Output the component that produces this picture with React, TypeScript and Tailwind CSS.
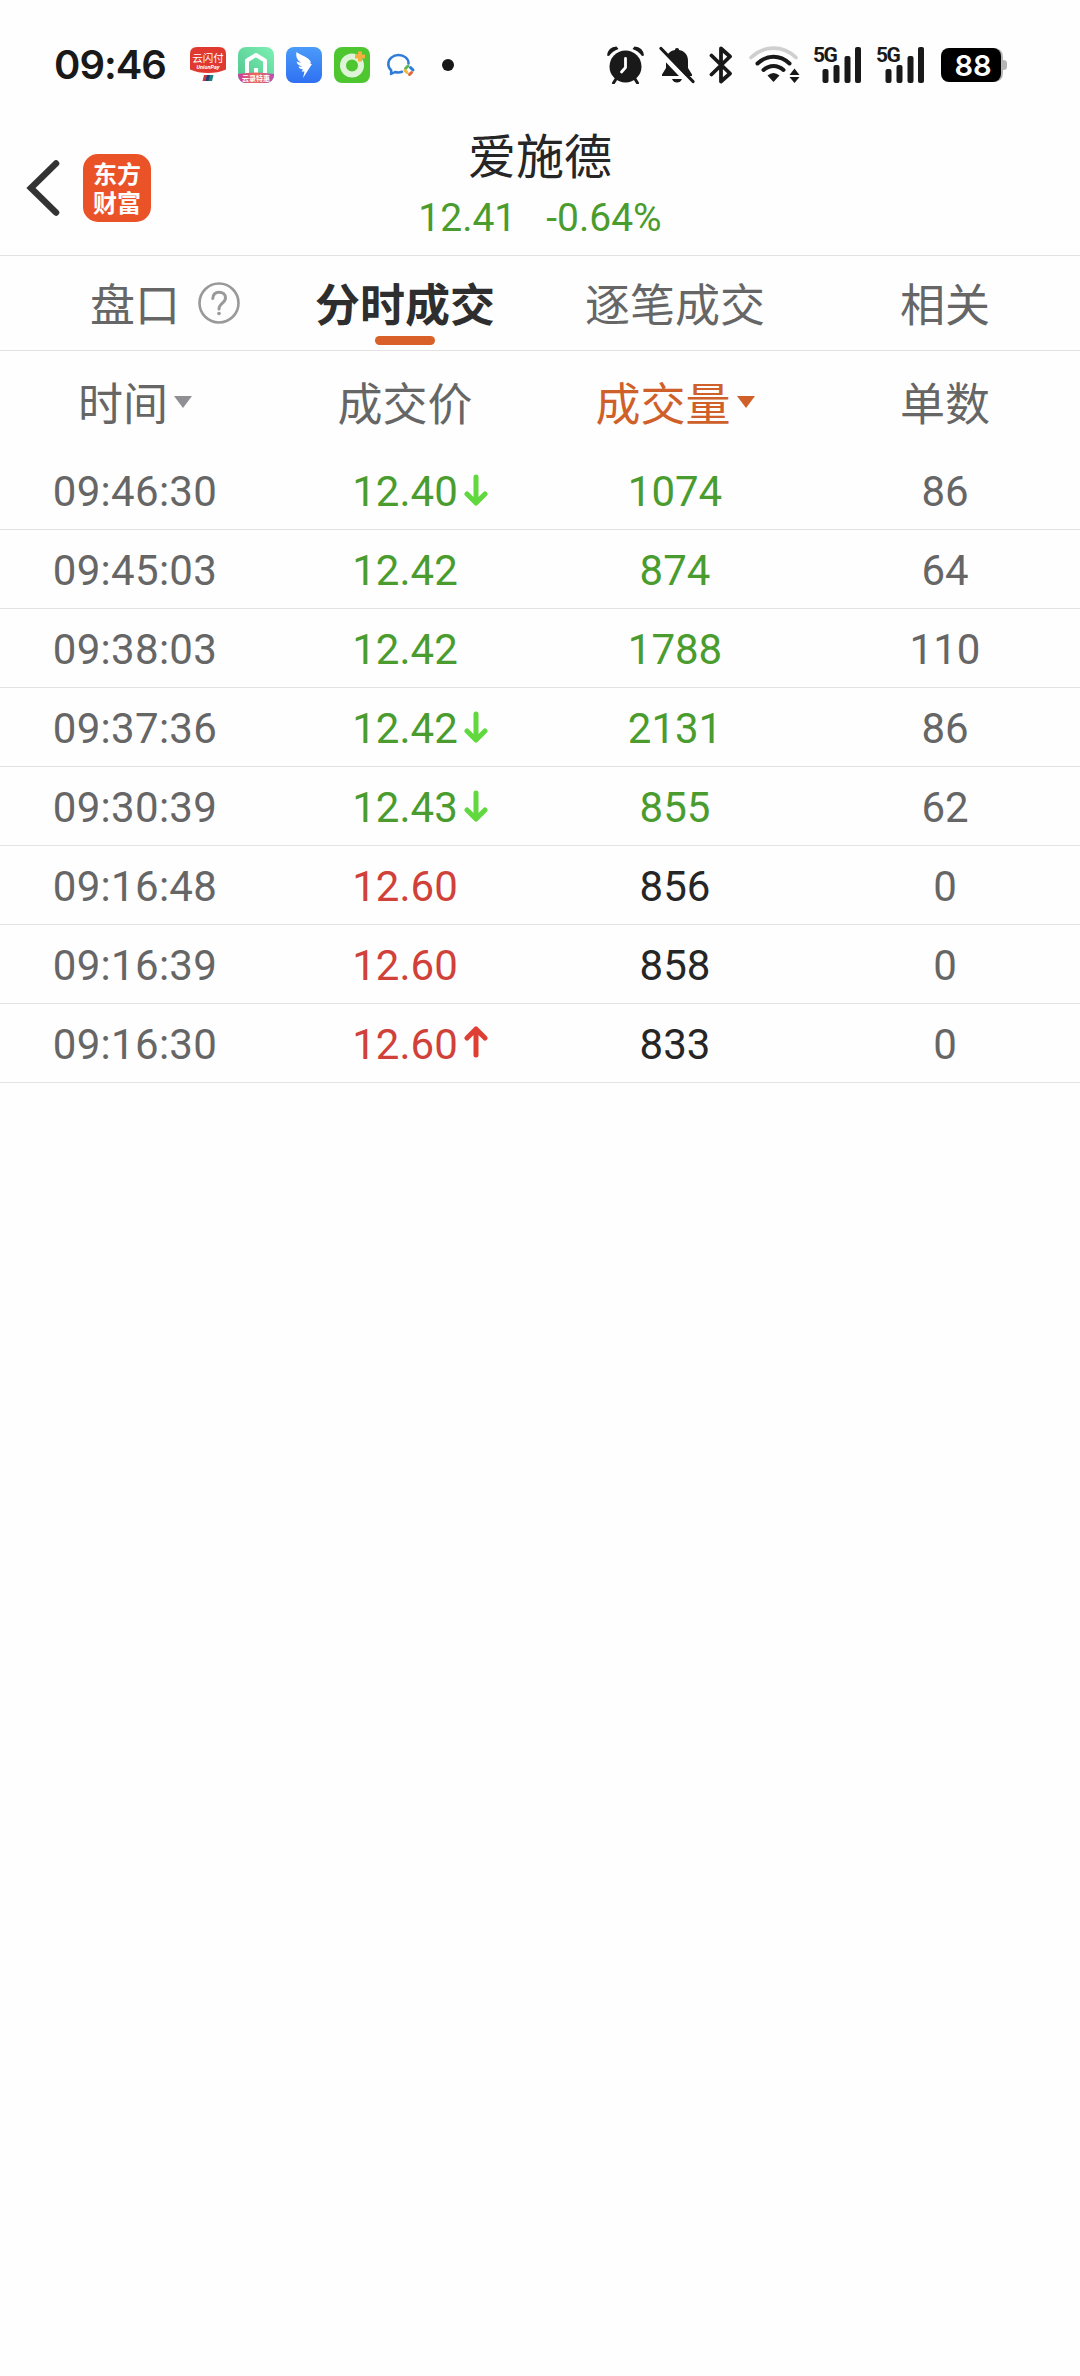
import type { ReactNode } from "react";
import clsx from "clsx";

type Trend = "up" | "down" | null;

type Trade = {
  time: string;
  price: string;
  trend: Trend;
  volume: string;
  count: string;
  side: "buy" | "sell";
};

const trades: Trade[] = [
  { time: "09:46:30", price: "12.40", trend: "down", volume: "1074", count: "86", side: "sell" },
  { time: "09:45:03", price: "12.42", trend: null, volume: "874", count: "64", side: "sell" },
  { time: "09:38:03", price: "12.42", trend: null, volume: "1788", count: "110", side: "sell" },
  { time: "09:37:36", price: "12.42", trend: "down", volume: "2131", count: "86", side: "sell" },
  { time: "09:30:39", price: "12.43", trend: "down", volume: "855", count: "62", side: "sell" },
  { time: "09:16:48", price: "12.60", trend: null, volume: "856", count: "0", side: "buy" },
  { time: "09:16:39", price: "12.60", trend: null, volume: "858", count: "0", side: "buy" },
  { time: "09:16:30", price: "12.60", trend: "up", volume: "833", count: "0", side: "buy" },
];

const cjk = "font-['Noto_Sans_CJK_SC',sans-serif]";

function AppBadges() {
  return (
    <div className="flex items-center gap-3">
      {/* UnionPay */}
      <svg width="36" height="36" viewBox="0 0 36 36">
        <path d="M7 0h22q7 0 7 7v15.500q-8 3.500-18 3.500T0 22.500V7q0-7 7-7z" fill="#e0392f" />
        <text x="18" y="14.500" fontSize="10.500" fill="#fff" textAnchor="middle" className={cjk}>云闪付</text>
        <text x="18" y="22" fontSize="5.500" fontStyle="italic" fontWeight="700" fill="#fff" textAnchor="middle" className="font-[Roboto,sans-serif]">UnionPay</text>
        <path d="M14 28h4l-1.500 6h-4z" fill="#c33a4a" />
        <path d="M17 28h4l-1.500 6h-4z" fill="#1f3f73" />
        <path d="M20 28h3.500l-1.500 6h-3.500z" fill="#1d7f80" />
      </svg>
      {/* smart home */}
      <svg width="36" height="36" viewBox="0 0 36 36">
        <defs>
          <clipPath id="home-clip"><rect width="36" height="36" rx="8" /></clipPath>
          <linearGradient id="home-bg" x1="0" y1="1" x2="1" y2="0">
            <stop offset="0" stopColor="#4fc48c" />
            <stop offset="1" stopColor="#7cf0b4" />
          </linearGradient>
          <linearGradient id="home-tag" x1="0" y1="0" x2="1" y2="0">
            <stop offset="0" stopColor="#c93fa0" />
            <stop offset=".5" stopColor="#ee6a55" />
            <stop offset="1" stopColor="#b64fb4" />
          </linearGradient>
        </defs>
        <g clipPath="url(#home-clip)">
          <rect width="36" height="36" fill="url(#home-bg)" />
          <path d="M9 27V13.500L18 8l9 5.500V27" fill="none" stroke="#fff" strokeWidth="4" strokeLinejoin="round" />
          <rect x="16" y="21" width="4" height="6" fill="#fff" />
          <path d="M0 27q18-3 36 0v9H0z" fill="url(#home-tag)" />
          <text x="18" y="33.500" fontSize="7" fontWeight="700" fill="#fff" textAnchor="middle" className={cjk}>云录特惠</text>
        </g>
      </svg>
      {/* DingTalk */}
      <svg width="36" height="36" viewBox="0 0 36 36">
        <defs>
          <linearGradient id="ding-bg" x1="0" y1="0" x2="0" y2="1">
            <stop offset="0" stopColor="#4a9bf9" />
            <stop offset="1" stopColor="#2f70f2" />
          </linearGradient>
        </defs>
        <rect width="36" height="36" rx="8" fill="url(#ding-bg)" />
        <path d="M10.500 5c3 2.500 8 4 11.500 6.500 2.500 2 3.300 3.500 2.500 5.500h1.500L17 31l1.500-6.500h-3l1.500-2c-3-.5-4-1.500-4.500-3l4 .3c-3.500-1-5.500-3-6-5.300l4.500 1.400C11.500 13 9.500 10 10.500 5z" fill="#fff" />
      </svg>
      {/* 360 */}
      <svg width="36" height="36" viewBox="0 0 36 36">
        <rect width="36" height="36" rx="8" fill="#4dc630" />
        <circle cx="18" cy="18.500" r="9" fill="none" stroke="#dff3d8" strokeWidth="6" />
        <path d="M26 4.500v10M21 9.500h10" stroke="#f3ae3d" strokeWidth="4" />
      </svg>
      {/* WeCom */}
      <svg width="36" height="36" viewBox="0 0 36 36" fill="none">
        <path d="M26.500 16.500c.2-5-4.500-8.500-10-8.500S6.300 12 6.300 17c0 3 1.300 5 3 6.500L9 27l4-2c2 .6 4.500.7 7-.2" stroke="#2f7bd8" strokeWidth="2.500" strokeLinecap="round" strokeLinejoin="round" />
        <path d="M23.500 21.500l2.500-2.500" stroke="#5db75a" strokeWidth="3" strokeLinecap="round" />
        <path d="M28.500 20.500l2.500 2.500" stroke="#2f7bd8" strokeWidth="3" strokeLinecap="round" />
        <path d="M23 23.500l2 2" stroke="#f1b73c" strokeWidth="3" strokeLinecap="round" />
        <path d="M27.500 27.500l2-2" stroke="#e2663d" strokeWidth="3" strokeLinecap="round" />
      </svg>
      <span className="ml-3 size-3 rounded-full bg-[#191919]" />
    </div>
  );
}

function Signal() {
  return (
    <div className="relative h-[38px] w-12">
      <span className="absolute top-[-3px] left-0 font-[Roboto,sans-serif] text-[21px] leading-[24px] font-bold tracking-[-1.500px] text-[#191919]">5G</span>
      <svg width="48" height="38" viewBox="0 0 48 38" fill="#191919">
        <rect x="9.500" y="23" width="6" height="14" rx="2" />
        <rect x="20.500" y="19" width="6" height="18" rx="2" />
        <rect x="31.500" y="10" width="6" height="27" rx="2" />
        <rect x="42" y="1" width="6" height="36" rx="2" />
      </svg>
    </div>
  );
}

function StatusBar() {
  return (
    <div className="flex h-[120px] items-center pt-2.5 pl-[54px]">
      <span className="w-[136px] font-[Inter,sans-serif] text-[40px] leading-none font-semibold tracking-[-1px] text-[#191919]">09:46</span>
      <AppBadges />
      <div className="ml-auto flex items-center pr-[73px]">
        {/* alarm */}
        <svg width="37" height="38" viewBox="0 0 37 38">
          <circle cx="18.500" cy="20.500" r="16" fill="#191919" />
          <path d="M0 9.500Q1 1 9.500 0.500L11.500 3Q5.500 5 2 10zM37 9.500Q36 1 27.500 0.500L25.500 3Q31.500 5 35 10z" fill="#191919" />
          <path d="M9 33l-2.500 4M28 33l2.500 4" stroke="#191919" strokeWidth="3" strokeLinecap="round" />
          <path d="M18.500 12.500v9l-4 4.500" stroke="#fff" strokeWidth="2.800" fill="none" strokeLinecap="round" strokeLinejoin="round" />
        </svg>
        {/* muted bell */}
        <svg width="36" height="38" viewBox="0 0 36 38" className="ml-[15px]">
          <path d="M18 2c1.500 0 2 .8 2 2 6 1 9 5.500 9 11v7l4 6.500v1.500H3v-1.500L7 22v-7C7 9.500 10 5 16 4c0-1.200.5-2 2-2z" fill="#191919" />
          <path d="M13 33h10q-1.500 3.500-5 3.500T13 33z" fill="#191919" />
          <path d="M0 5.500L31 38" stroke="#fefefe" strokeWidth="5" />
          <path d="M2 2.500L34 35.500" stroke="#191919" strokeWidth="3.200" strokeLinecap="round" />
        </svg>
        {/* bluetooth */}
        <svg width="24" height="38" viewBox="0 0 24 38" className="ml-3.5" fill="none" stroke="#191919" strokeWidth="3.800" strokeLinecap="round" strokeLinejoin="round">
          <path d="M2.500 9.500L21 27.500 12 35.500V2.500l9 8L2.500 28.500" />
        </svg>
        {/* wifi */}
        <svg width="51" height="38" viewBox="0 0 51 38" className="ml-[16px]" fill="none">
          <path d="M2 11.500C15-1 34-1 47 11.500" stroke="#cfcfcf" strokeWidth="3.600" strokeLinecap="round" />
          <path d="M8.500 17.500C18 8.500 31 8.500 40.500 17.500" stroke="#191919" strokeWidth="4" strokeLinecap="round" />
          <path d="M14.500 24C20.500 18.500 28.500 18.500 34.500 24" stroke="#191919" strokeWidth="4" strokeLinecap="round" />
          <path d="M18.500 29.500Q24.500 24.500 30.500 29.500L24.500 36z" fill="#191919" />
          <path d="M45.500 22.500l5 6.500h-10zM45.500 37l5-6h-10z" fill="#191919" />
        </svg>
        <div className="ml-[13px] flex gap-[15px]">
          <Signal />
          <Signal />
        </div>
        <div className="ml-[17px] flex items-center">
          <span className="z-10 flex h-[34px] w-[60px] items-center justify-center rounded-lg bg-black pl-1 font-[Inter,sans-serif] text-[29px] leading-none font-semibold text-white">
            88
          </span>
          <svg width="14" height="34" viewBox="0 0 14 34" className="-ml-2">
            <path d="M0 0q10 0 10 9v3q4 0 4 3v4q0 3-4 3v3q0 9-10 9z" fill="#b5b5b5" />
          </svg>
        </div>
      </div>
    </div>
  );
}

function Header() {
  return (
    <header className="relative flex h-[136px] items-center border-b border-[#e3e3e3] pl-[26px]">
      <svg width="34" height="56" viewBox="0 0 34 56" fill="none" stroke="#333" strokeWidth="6.500">
        <path d="M30 3.500L5 28 30 52.500" strokeLinecap="round" />
      </svg>
      <div className={clsx("ml-[23px] flex size-[68px] flex-col items-center justify-center rounded-[15px] bg-[#ea5328] pb-0.5 text-[24px] leading-[29px] font-bold text-white", cjk)}>
        <span>东方</span>
        <span>财富</span>
      </div>
      <div className="pointer-events-none absolute inset-0 flex flex-col items-center pt-px">
        <h1 className={clsx("text-[48px] leading-[64px] text-[#262626]", cjk)}>爱施德</h1>
        <p className="mt-1 flex gap-[30px] font-[Roboto,sans-serif] text-[39px] leading-[58px] text-[#4a9c2e]">
          <span>12.41</span>
          <span>-0.64%</span>
        </p>
      </div>
    </header>
  );
}

function Tab({ label, active, children }: { label: string; active?: boolean; children?: ReactNode }) {
  return (
    <button
      className={clsx(
        "relative flex items-center justify-center pb-0.5 text-[45px] leading-none",
        cjk,
        active ? "font-bold text-[#2e2e2e]" : "text-[#666]"
      )}
    >
      {label}
      {children}
      {active && <span className="absolute bottom-[5px] left-[105px] h-[9px] w-[60px] rounded-full bg-[#d96028]" />}
    </button>
  );
}

function HelpIcon() {
  return (
    <svg width="42" height="42" viewBox="0 0 42 42" className="absolute top-[26px] left-[198px]" fill="none" stroke="#999" strokeWidth="2.600">
      <circle cx="21" cy="21" r="19.500" />
      <path d="M14.800 16.500c.2-4 2.700-6.300 6.300-6.300s6.400 2.200 6.400 5.600c0 5.500-6.500 5.200-6.500 11.200" strokeWidth="3" strokeLinecap="round" />
      <circle cx="21" cy="31.500" r="1.800" fill="#999" stroke="none" />
    </svg>
  );
}

function SortMark() {
  return (
    <svg width="18" height="12" viewBox="0 0 18 12" className="mt-0.5 ml-1.5" fill="currentColor">
      <path d="M0 0h18L9 12z" />
    </svg>
  );
}

function TrendArrow({ trend }: { trend: "up" | "down" }) {
  return (
    <svg
      width="24"
      height="32"
      viewBox="0 0 24 32"
      className={clsx("absolute left-[194px]", trend === "up" ? "top-[22px] rotate-180 text-[#df3f32]" : "top-[23px] text-[#60d83e]")}
      fill="none"
      stroke="currentColor"
      strokeWidth="5"
      strokeLinecap="round"
      strokeLinejoin="round"
    >
      <path d="M12 3v25M3 20l9 9 9-9" />
    </svg>
  );
}

function TradeRow({ trade }: { trade: Trade }) {
  const sell = trade.side === "sell";
  return (
    <div className="grid h-[79px] grid-cols-4 border-b border-[#e3e3e3] text-center font-[Roboto,sans-serif] text-[42px] leading-[82px] text-[#666]">
      <span className="tracking-[0.300px]">{trade.time}</span>
      <span className={clsx("relative", sell ? "text-[#4a9c2e]" : "text-[#d0413a]")}>
        {trade.price}
        {trade.trend && <TrendArrow trend={trade.trend} />}
      </span>
      <span className={sell ? "text-[#4a9c2e]" : "text-[#262626]"}>{trade.volume}</span>
      <span>{trade.count}</span>
    </div>
  );
}

export default function App() {
  return (
    <div className="min-h-[2376px] w-[1080px] bg-[#fefefe]">
      <StatusBar />
      <Header />
      <nav className="grid h-[95px] grid-cols-4 border-b border-[#e3e3e3]">
        <Tab label="盘口">
          <HelpIcon />
        </Tab>
        <Tab label="分时成交" active />
        <Tab label="逐笔成交" />
        <Tab label="相关" />
      </nav>
      <div className={clsx("grid h-[100px] grid-cols-4 text-[45px] leading-none text-[#666]", cjk)}>
        <div className="flex items-center justify-center">
          时间
          <span className="text-[#8f8f94]"><SortMark /></span>
        </div>
        <div className="flex items-center justify-center">成交价</div>
        <div className="flex items-center justify-center text-[#cf6029]">
          成交量
          <SortMark />
        </div>
        <div className="flex items-center justify-center">单数</div>
      </div>
      {trades.map((trade) => (
        <TradeRow key={trade.time} trade={trade} />
      ))}
    </div>
  );
}
